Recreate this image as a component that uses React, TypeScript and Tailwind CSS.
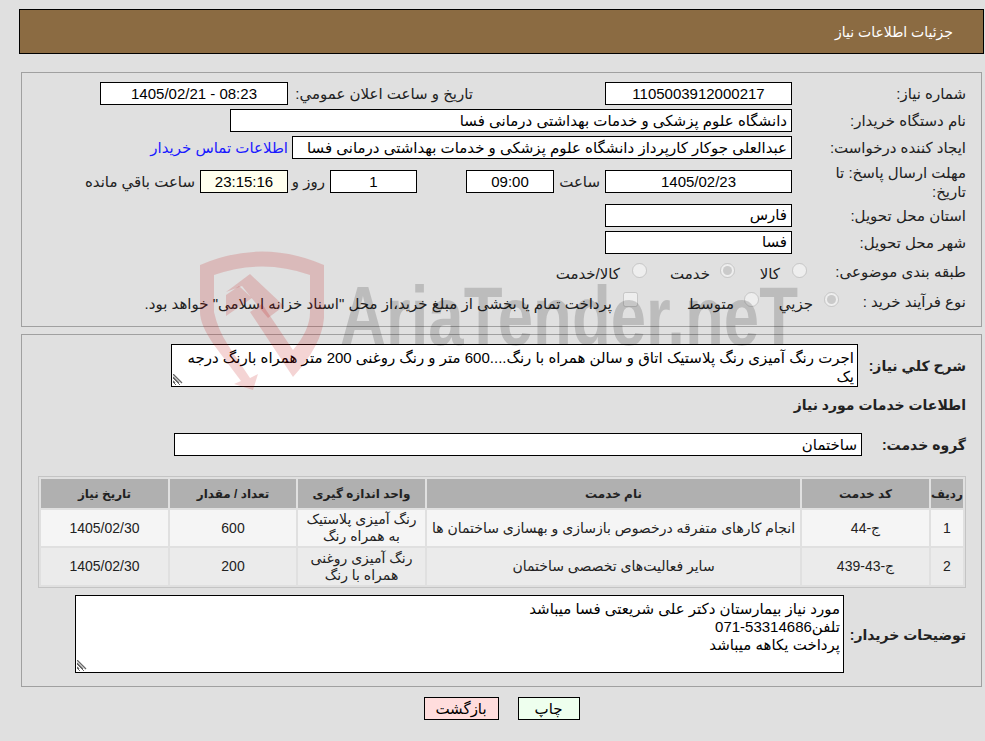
const fieldCls =
  "h-[23px] border border-black bg-white text-center text-[15px] text-black outline-none";

function Field({ value, className = "" }: { value: string; className?: string }) {
  return <input readOnly dir="rtl" value={value} className={`${fieldCls} ${className}`} />;
}

function Radio({ checked = false }: { checked?: boolean }) {
  return <input type="radio" disabled checked={checked} readOnly className="m-0 mb-[3px] h-[15px] w-[15px] shrink-0" />;
}

// darker resize grip, sits over the textarea's own corner
function Grip() {
  return (
    <svg className="pointer-events-none absolute bottom-[3px] left-[2px]" width="10" height="10" viewBox="0 0 10 10">
      <path d="M0 0 L9 9 M0 3 L6 9 M0 7 L2 9" stroke="#666" strokeWidth="1.3" fill="none" />
    </svg>
  );
}

function Watermark() {
  return (
    <svg
      className="pointer-events-none absolute left-0 top-0"
      width="985"
      height="741"
      viewBox="0 0 985 741"
    >
      {/* shield */}
      <g fill="#c00000" fillOpacity="0.17">
        <path d="M200 265 Q262 238 324 265 L324 318 Q322 345 293 377 L250 312 L262 304 L293 350 Q310 330 310 312 L310 275 Q262 258 214 275 L214 312 Q218 330 228 345 L250 378 L258 374 L253 390 L234 384 L241 381 L214 345 Q200 325 200 312 Z" />
        <path d="M226 316 L252 298 L239 286 L226 295 Z" />
        <path d="M226 292 L250 274 L284 306 L268 318 L258 306 L242 286 Z" />
      </g>
      <text
        x="340"
        y="345"
        direction="ltr"
        textAnchor="start"
        textLength="458"
        lengthAdjust="spacingAndGlyphs"
        fontFamily="Liberation Sans, sans-serif"
        fontWeight="700"
        fontSize="84"
        fill="#000"
        fillOpacity="0.16"
      >
        AriaTender.neT
      </text>
    </svg>
  );
}

export default function App() {
  return (
    <div
      dir="rtl"
      className="relative h-[741px] w-[985px] overflow-hidden bg-[#e0e0e0] pl-[19px] pr-px pt-[9px] font-['Liberation_Sans','DejaVu_Sans',sans-serif] text-[15px] text-[#222]"
    >
      {/* Title bar */}
      <div className="flex h-[45px] items-center border border-black bg-[#8b6b42] pr-[30px] pt-[2px] text-[14px] text-white">
        جزئیات اطلاعات نیاز
      </div>

      {/* Main info */}
      <div className="mx-[2px] mt-[18px] h-[255px] border border-[#a0a0a0] pr-[15px] pt-[9px]">
        <div className="flex h-[23px] items-center">
          <label className="w-[174px] pt-[2px]">شماره نیاز:</label>
          <Field value="1105003912000217" className="w-[187px]" />
          <label className="mr-[132px] w-[180px] whitespace-nowrap pt-[2px]">تاریخ و ساعت اعلان عمومي:</label>
          <Field value="08:23 - 1405/02/21" className="mr-[5px] w-[188px]" />
        </div>
        <div className="mt-[4px] flex h-[23px] items-center">
          <label className="w-[174px] pt-[2px]">نام دستگاه خریدار:</label>
          <Field value="دانشگاه علوم پزشکی و خدمات بهداشتی درمانی فسا" className="w-[562px] !text-right pr-1" />
        </div>
        <div className="mt-[4px] flex h-[23px] items-center">
          <label className="w-[174px] pt-[2px]">ایجاد کننده درخواست:</label>
          <Field
            value="عبدالعلی جوکار کارپرداز دانشگاه علوم پزشکی و خدمات بهداشتی درمانی فسا"
            className="w-[500px] !text-right pr-1"
          />
          <a href="#" className="mr-[4px] whitespace-nowrap pt-[2px] text-[#1a1aff]">
            اطلاعات تماس خریدار
          </a>
        </div>
        <div className="mt-[4px] flex h-[37px] items-center">
          <label className="w-[174px] leading-[19px]">
            مهلت ارسال پاسخ: تا
            <br />
            تاریخ:
          </label>
          <Field value="1405/02/23" className="h-[22px] w-[187px]" />
          <span className="mr-[5px] w-[46px] pt-[2px]">ساعت</span>
          <Field value="09:00" className="h-[22px] w-[88px]" />
          <Field value="1" className="mr-[49px] h-[22px] w-[87px]" />
          <span className="mr-[5px] w-[37px] pt-[2px]">روز و</span>
          <Field value="23:15:16" className="h-[22px] w-[88px] !bg-[#ffffee]" />
          <span className="mr-[5px] whitespace-nowrap pt-[2px]">ساعت باقي مانده</span>
        </div>
        <div className="mt-[4px] flex h-[22px] items-center">
          <label className="w-[174px] pt-[2px]">استان محل تحویل:</label>
          <Field value="فارس" className="h-[22px] w-[187px] !text-right pr-1" />
        </div>
        <div className="mt-[5px] flex h-[22px] items-center">
          <label className="w-[174px] pt-[2px]">شهر محل تحویل:</label>
          <Field value="فسا" className="h-[22px] w-[187px] !text-right pr-1" />
        </div>
        <div className="mt-[8px] flex h-[22px] items-center">
          <label className="w-[159px]">طبقه بندی موضوعی:</label>
          <Radio />
          <span className="mr-[12px] mt-[5px] w-[45px]">کالا</span>
          <Radio checked />
          <span className="mr-[10px] mt-[5px] w-[63px]">خدمت</span>
          <Radio />
          <span className="mr-[12px] mt-[5px]">کالا/خدمت</span>
        </div>
        <div className="mt-[7px] flex h-[22px] items-center">
          <label className="w-[127px] pt-[2px]">نوع فرآیند خرید :</label>
          <Radio checked />
          <span className="mr-[11px] mt-[7px] w-[54px]">جزیي</span>
          <Radio />
          <span className="mr-[10px] mt-[7px] w-[96px]">متوسط</span>
          <input type="checkbox" disabled className="m-0 mb-[3px] h-[15px] w-[15px] shrink-0" />
          <span className="mr-[11px] mt-[7px] whitespace-nowrap">
            پرداخت تمام یا بخشی از مبلغ خرید،از محل "اسناد خزانه اسلامی" خواهد بود.
          </span>
        </div>
      </div>

      {/* Service details */}
      <div className="mx-[2px] mt-[7px] h-[353px] border border-[#a0a0a0] pr-[15px] pt-[9px] text-[14px]">
        <div className="flex h-[43px] items-center">
          <label className="w-[108px] pt-[2px] font-bold">شرح کلي نياز:</label>
          <div className="relative h-[43px] w-[687px]">
            <textarea
              readOnly
              className="block h-[43px] w-[687px] border border-black bg-white px-[3px] pt-[3px] text-[15px] leading-[19px] text-black outline-none"
              defaultValue="اجرت رنگ آمیزی رنگ پلاستیک اتاق و سالن همراه با رنگ....600 متر و رنگ روغنی 200 متر همراه بارنگ درجه یک"
            />
            <Grip />
          </div>
        </div>
        <div className="mt-[7px] flex h-[20px] items-center pt-[2px] font-bold">اطلاعات خدمات مورد نیاز</div>
        <div className="mt-[19px] flex h-[23px] items-center">
          <label className="w-[104px] pt-[2px] font-bold">گروه خدمت:</label>
          <Field value="ساختمان" className="w-[688px] !text-right pr-1" />
        </div>
        <table className="mt-[20px] w-[928px] table-fixed border-separate border-spacing-[2px] border border-[#c4c4c4] text-center text-[14px]">
          <thead>
            <tr className="h-[29px] bg-[#b0b0b0] text-[12px]">
              <th className="w-[32px] font-bold">ردیف</th>
              <th className="w-[127px] font-bold">کد خدمت</th>
              <th className="font-bold">نام خدمت</th>
              <th className="w-[127px] font-bold">واحد اندازه گیری</th>
              <th className="w-[126px] font-bold">تعداد / مقدار</th>
              <th className="w-[127px] font-bold">تاریخ نیاز</th>
            </tr>
          </thead>
          <tbody>
            <tr className="h-[36px] bg-[#f5f5f5]">
              <td>1</td>
              <td>ج-44</td>
              <td className="whitespace-nowrap">انجام کارهای متفرقه درخصوص بازسازی و بهسازی ساختمان ها</td>
              <td className="leading-[17px]">
                رنگ آمیزی پلاستیک
                <br />
                به همراه رنگ
              </td>
              <td>600</td>
              <td>1405/02/30</td>
            </tr>
            <tr className="h-[37px] bg-[#ebebeb]">
              <td>2</td>
              <td>ج-43-439</td>
              <td>سایر فعالیت‌های تخصصی ساختمان</td>
              <td className="leading-[17px]">
                رنگ آمیزی روغنی
                <br />
                همراه با رنگ
              </td>
              <td>200</td>
              <td>1405/02/30</td>
            </tr>
          </tbody>
        </table>
        <div className="mt-[7px] flex h-[78px] items-center">
          <label className="w-[122px] pt-[2px] font-bold">توضیحات خریدار:</label>
          <div className="relative h-[78px] w-[769px]">
            <textarea
              readOnly
              className="block h-[78px] w-[769px] border border-black bg-white px-[3px] pb-[3px] pt-[4px] text-[15px] leading-[18px] text-black outline-none"
              defaultValue={"مورد نیاز بیمارستان دکتر علی شریعتی فسا میباشد\nتلفن53314686-071\nپرداخت یکاهه میباشد"}
            />
            <Grip />
          </div>
        </div>
      </div>

      {/* Actions */}
      <div className="mt-[10px] flex justify-center gap-[19px]">
        <button className="h-[23px] w-[62px] border border-black bg-[#eeffee] text-[15px] text-black">چاپ</button>
        <button className="h-[23px] w-[75px] border border-black bg-[#ffdddd] text-[15px] text-black">بازگشت</button>
      </div>

      <Watermark />
    </div>
  );
}
